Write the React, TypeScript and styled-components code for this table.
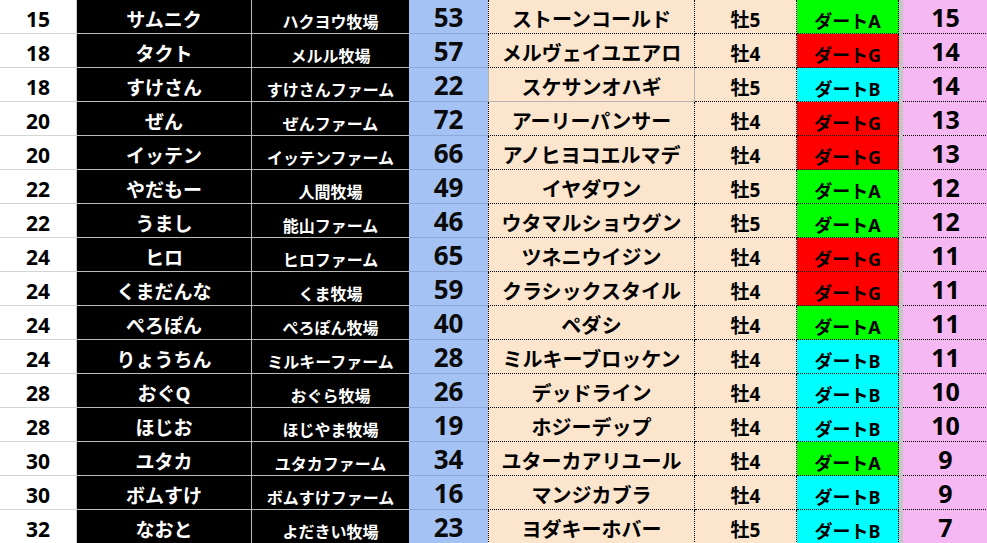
import styled, { createGlobalStyle } from 'styled-components';

type Course = 'A' | 'G' | 'B';

type Entry = {
  rank: number;
  owner: string;
  farm: string;
  score: number;
  horse: string;
  sex: string;
  course: Course;
  point: number;
};

const entries: Entry[] = [
  { rank: 15, owner: 'サムニク', farm: 'ハクヨウ牧場', score: 53, horse: 'ストーンコールド', sex: '牡5', course: 'A', point: 15 },
  { rank: 18, owner: 'タクト', farm: 'メルル牧場', score: 57, horse: 'メルヴェイユエアロ', sex: '牡4', course: 'G', point: 14 },
  { rank: 18, owner: 'すけさん', farm: 'すけさんファーム', score: 22, horse: 'スケサンオハギ', sex: '牡5', course: 'B', point: 14 },
  { rank: 20, owner: 'ぜん', farm: 'ぜんファーム', score: 72, horse: 'アーリーパンサー', sex: '牡4', course: 'G', point: 13 },
  { rank: 20, owner: 'イッテン', farm: 'イッテンファーム', score: 66, horse: 'アノヒヨコエルマデ', sex: '牡4', course: 'G', point: 13 },
  { rank: 22, owner: 'やだもー', farm: '人間牧場', score: 49, horse: 'イヤダワン', sex: '牡5', course: 'A', point: 12 },
  { rank: 22, owner: 'うまし', farm: '能山ファーム', score: 46, horse: 'ウタマルショウグン', sex: '牡5', course: 'A', point: 12 },
  { rank: 24, owner: 'ヒロ', farm: 'ヒロファーム', score: 65, horse: 'ツネニウイジン', sex: '牡4', course: 'G', point: 11 },
  { rank: 24, owner: 'くまだんな', farm: 'くま牧場', score: 59, horse: 'クラシックスタイル', sex: '牡4', course: 'G', point: 11 },
  { rank: 24, owner: 'ぺろぽん', farm: 'ぺろぽん牧場', score: 40, horse: 'ペダシ', sex: '牡4', course: 'A', point: 11 },
  { rank: 24, owner: 'りょうちん', farm: 'ミルキーファーム', score: 28, horse: 'ミルキーブロッケン', sex: '牡4', course: 'B', point: 11 },
  { rank: 28, owner: 'おぐQ', farm: 'おぐら牧場', score: 26, horse: 'デッドライン', sex: '牡4', course: 'B', point: 10 },
  { rank: 28, owner: 'ほじお', farm: 'ほじやま牧場', score: 19, horse: 'ホジーデップ', sex: '牡4', course: 'B', point: 10 },
  { rank: 30, owner: 'ユタカ', farm: 'ユタカファーム', score: 34, horse: 'ユターカアリユール', sex: '牡4', course: 'A', point: 9 },
  { rank: 30, owner: 'ボムすけ', farm: 'ボムすけファーム', score: 16, horse: 'マンジカブラ', sex: '牡4', course: 'B', point: 9 },
  { rank: 32, owner: 'なおと', farm: 'よだきい牧場', score: 23, horse: 'ヨダキーホバー', sex: '牡5', course: 'B', point: 7 },
];

const courseColors: Record<Course, string> = {
  A: '#00ff00',
  G: '#ff0000',
  B: '#00ffff',
};

export default function App() {
  return (
    <>
      <GlobalStyle />
      <Sheet>
        {entries.map((entry, i) => (
          <Row key={i}>
            <RankCell>{entry.rank}</RankCell>
            <OwnerCell>{entry.owner}</OwnerCell>
            <FarmCell>{entry.farm}</FarmCell>
            <ScoreCell>{entry.score}</ScoreCell>
            <HorseCell $plain={i === 2}>{entry.horse}</HorseCell>
            <SexCell>{entry.sex}</SexCell>
            <CourseCell $tone={courseColors[entry.course]}>ダート{entry.course}</CourseCell>
            <Divider />
            <PointCell>{entry.point}</PointCell>
          </Row>
        ))}
      </Sheet>
    </>
  );
}

const GlobalStyle = createGlobalStyle`
  html, body {
    margin: 0;
    padding: 0;
    background: #ffffff;
  }
  body {
    font-family: "Noto Sans", "Noto Sans CJK JP", sans-serif;
    font-weight: 700;
  }
`;

const Sheet = styled.div`
  width: 987px;
  height: 543px;
  overflow: hidden;
  display: flex;
  flex-direction: column;
`;

const Row = styled.div`
  display: grid;
  grid-template-columns: 77px 175px 157px 79px 207px 102px 102px 4px 85px;
  height: 34px;
  flex: none;
`;

const Cell = styled.div`
  box-sizing: border-box;
  display: flex;
  align-items: flex-end;
  justify-content: center;
  padding-bottom: 3px;
  line-height: 1;
  white-space: nowrap;
  overflow: hidden;
`;

const RankCell = styled(Cell)`
  font-size: 21px;
  color: #000000;
  background: #ffffff;
  border-bottom: 1px solid #d4d4d4;
  border-right: 1px solid #c8c8c8;
`;

const OwnerCell = styled(Cell)`
  font-size: 19px;
  color: #ffffff;
  background: #000000;
  border-bottom: 1px solid #bcbcbc;
  border-right: 1px solid #bcbcbc;
`;

const FarmCell = styled(Cell)`
  font-size: 16px;
  color: #ffffff;
  background: #000000;
  border-bottom: 1px solid #bcbcbc;
`;

const ScoreCell = styled(Cell)`
  font-size: 26px;
  color: #0a0a0a;
  background: #a4c2f4;
  border-bottom: 1px solid #8fa9d8;
`;

const HorseCell = styled(Cell)<{ $plain?: boolean }>`
  font-size: 20px;
  color: #000000;
  background: #fce5cd;
  border-bottom: 1px ${({ $plain }) => ($plain ? 'solid #b4b4b4' : 'dotted #000000')};
  border-left: 1px ${({ $plain }) => ($plain ? 'solid #b4b4b4' : 'dotted #000000')};
  border-right: 1px ${({ $plain }) => ($plain ? 'solid #b4b4b4' : 'dotted #000000')};
`;

const SexCell = styled(Cell)`
  font-size: 19px;
  color: #000000;
  background: #fce5cd;
  border-bottom: 1px dotted #000000;
  border-right: 1px dotted #000000;
`;

const CourseCell = styled(Cell)<{ $tone: string }>`
  font-size: 18px;
  color: #000000;
  background: ${({ $tone }) => $tone};
  border-bottom: 1px dotted #000000;
  border-right: 1px dotted #000000;
`;

const Divider = styled.div`
  background: #c6c6c6;
`;

const PointCell = styled(Cell)`
  font-size: 25px;
  color: #000000;
  background: #f5b8f2;
  border-bottom: 1px dotted #000000;
`;
